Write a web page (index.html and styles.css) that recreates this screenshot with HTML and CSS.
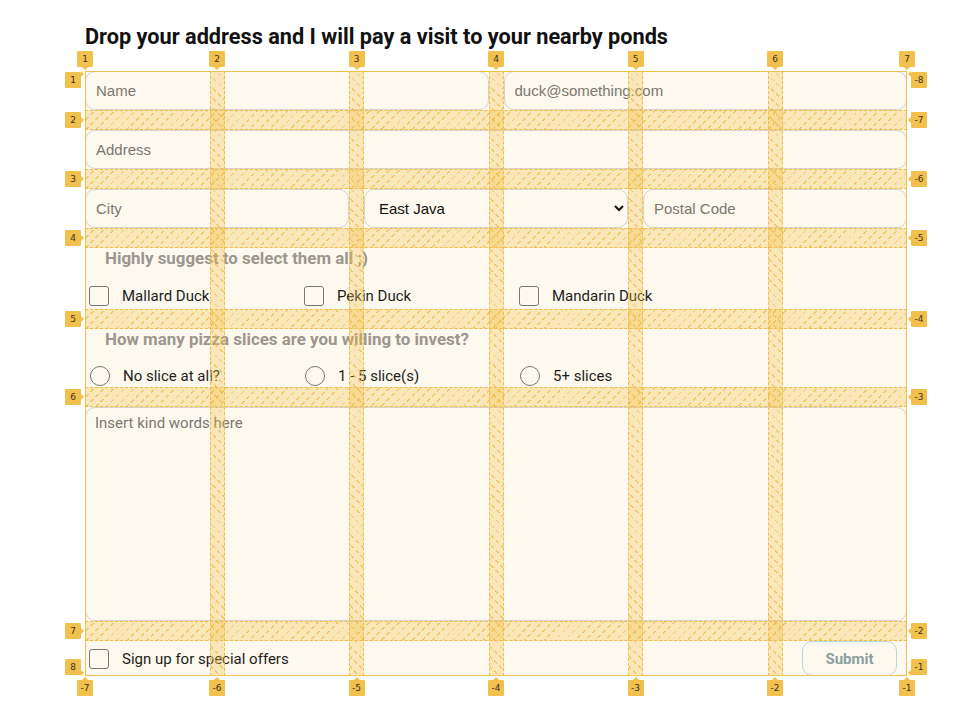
FILE: index.html
```html
<!DOCTYPE html>
<html lang="en">
<head>
<meta charset="utf-8">
<title>Duck visit</title>
<link rel="stylesheet" href="styles.css">
</head>
<body>
<main class="page">
  <h1 class="title">Drop your address and I will pay a visit to your nearby ponds</h1>
  <div class="board">
    <form class="form">
      <input class="field span3" type="text" placeholder="Name">
      <input class="field span3" type="email" placeholder="duck@something.com">
      <input class="field span6" type="text" placeholder="Address">
      <input class="field span2" type="text" placeholder="City">
      <select class="field select span2"><option>East Java</option></select>
      <input class="field span2" type="text" placeholder="Postal Code">

      <div class="group span6">
        <p class="group-title">Highly suggest to select them all ;)</p>
        <div class="options">
          <label class="opt"><input class="box" type="checkbox">Mallard Duck</label>
          <label class="opt"><input class="box" type="checkbox">Pekin Duck</label>
          <label class="opt"><input class="box" type="checkbox">Mandarin Duck</label>
        </div>
      </div>

      <div class="group group-radio span6">
        <p class="group-title">How many pizza slices are you willing to invest?</p>
        <div class="options">
          <label class="opt"><input class="dot" type="radio" name="pizza">No slice at all?</label>
          <label class="opt"><input class="dot" type="radio" name="pizza">1 - 5 slice(s)</label>
          <label class="opt"><input class="dot" type="radio" name="pizza">5+ slices</label>
        </div>
      </div>

      <textarea class="field area span6" placeholder="Insert kind words here"></textarea>

      <label class="opt signup"><input class="box" type="checkbox">Sign up for special offers</label>
      <button class="submit" type="button">Submit</button>
    </form>

    <div class="overlay" aria-hidden="true">
      <div class="cgap c2"></div>
      <div class="cgap c4"></div>
      <div class="cgap c6"></div>
      <div class="cgap c8"></div>
      <div class="cgap c10"></div>
      <div class="rgap r2"></div>
      <div class="rgap r4"></div>
      <div class="rgap r6"></div>
      <div class="rgap r8"></div>
      <div class="rgap r10"></div>
      <div class="rgap r12"></div>

      <span class="lbl top x1">1</span>
      <span class="lbl top x2">2</span>
      <span class="lbl top x3">3</span>
      <span class="lbl top x4">4</span>
      <span class="lbl top x5">5</span>
      <span class="lbl top x6">6</span>
      <span class="lbl top x7">7</span>

      <span class="lbl btm x1">-7</span>
      <span class="lbl btm x2">-6</span>
      <span class="lbl btm x3">-5</span>
      <span class="lbl btm x4">-4</span>
      <span class="lbl btm x5">-3</span>
      <span class="lbl btm x6">-2</span>
      <span class="lbl btm x7">-1</span>

      <span class="lbl left y1 corner-top">1</span>
      <span class="lbl left y2">2</span>
      <span class="lbl left y3">3</span>
      <span class="lbl left y4">4</span>
      <span class="lbl left y5">5</span>
      <span class="lbl left y6">6</span>
      <span class="lbl left y7">7</span>
      <span class="lbl left y8 corner-bottom">8</span>

      <span class="lbl right y1 corner-top">-8</span>
      <span class="lbl right y2">-7</span>
      <span class="lbl right y3">-6</span>
      <span class="lbl right y4">-5</span>
      <span class="lbl right y5">-4</span>
      <span class="lbl right y6">-3</span>
      <span class="lbl right y7">-2</span>
      <span class="lbl right y8 corner-bottom">-1</span>
    </div>
  </div>
</main>
</body>
</html>
```

FILE: styles.css
```css
* { box-sizing: border-box; }

html, body {
  margin: 0;
  background: #ffffff;
}

body {
  font-family: Roboto, "Liberation Sans", sans-serif;
  color: #1d1d1d;
  min-height: 716px;
}

.page {
  width: 907px;
  padding: 24px 0 40px 85px;
}

.title {
  margin: 0 0 21px;
  font-size: 21.7px;
  line-height: 26px;
  font-weight: 700;
  color: #111;
}

.board {
  position: relative;
  width: 822px;
}

.form {
  display: grid;
  grid-template-columns: repeat(6, 1fr);
  grid-template-rows: 39px 39px 39px 61px 58px 214px 35px;
  column-gap: 15px;
  row-gap: 20px;
  background: #fdf9ee;
  margin: 0;
}

.span2 { grid-column: span 2; }
.span3 { grid-column: span 3; }
.span6 { grid-column: span 6; }

.field {
  width: 100%;
  height: 100%;
  margin: 0;
  border: 1px solid #d8d3c8;
  border-radius: 10px;
  background: #fdf9ee;
  padding: 0 10px;
  font-family: "Liberation Sans", Arial, sans-serif;
  font-size: 15px;
  color: #222;
  outline: none;
}

.field::placeholder {
  color: #7b7772;
  opacity: 1;
}

.select {
  padding: 0 8px 0 10px;
  color: #111;
}

.area {
  resize: none;
  padding: 6px 9px;
  font-family: Roboto, "Liberation Sans", sans-serif;
  line-height: 18px;
}

.group {
  display: flex;
  flex-direction: column;
  justify-content: space-between;
  padding: 0 0 3px;
}

.group-radio {
  padding: 0 0 1px;
}

.group-title {
  margin: 0;
  padding-left: 20px;
  font-size: 16.9px;
  line-height: 20px;
  font-weight: 700;
  color: #9b968f;
}

.options {
  display: flex;
}

.opt {
  display: flex;
  align-items: center;
  width: 215px;
  height: 20px;
  font-size: 15px;
  line-height: 20px;
  color: #1d1d1d;
}

.box {
  appearance: none;
  width: 20px;
  height: 20px;
  margin: 0 13px 0 4px;
  border: 1px solid #7a7672;
  border-radius: 3px;
  background: transparent;
  flex: none;
}

.dot {
  appearance: none;
  width: 20px;
  height: 20px;
  margin: 0 13px 0 5px;
  border: 1px solid #7a7672;
  border-radius: 50%;
  background: transparent;
  flex: none;
}

.signup {
  grid-column: 1 / span 4;
  align-self: center;
  width: auto;
}

.submit {
  grid-column: 6;
  justify-self: end;
  width: 95px;
  height: 35px;
  margin: 0 10px 0 0;
  border: 1px solid #b9d6d8;
  border-radius: 10px;
  background: #fdf9ee;
  font-family: Roboto, "Liberation Sans", sans-serif;
  font-size: 15px;
  font-weight: 700;
  color: #8c9fa2;
}

/* grid inspector overlay */
.overlay {
  position: absolute;
  inset: 0;
  display: grid;
  grid-template-columns: 1fr 15px 1fr 15px 1fr 15px 1fr 15px 1fr 15px 1fr;
  grid-template-rows: 39px 20px 39px 20px 39px 20px 61px 20px 58px 20px 214px 20px 35px;
  box-shadow: inset 0 0 0 1px #f0c04e;
  pointer-events: none;
}

.cgap, .rgap {
  position: relative;
  background: rgba(244, 192, 76, 0.32);
  border: 0 dashed #efbd48;
}

.cgap {
  grid-row: 1 / -1;
  border-left-width: 1px;
  border-right-width: 1px;
}

.rgap {
  grid-column: 1 / -1;
  border-top-width: 1px;
  border-bottom-width: 1px;
}

.cgap::before, .rgap::before {
  content: "";
  position: absolute;
  inset: 0;
}

.rgap::before {
  background: repeating-linear-gradient(135deg, transparent 0 6px, rgba(238, 180, 55, 0.65) 6px 7.2px);
  -webkit-mask-image: repeating-linear-gradient(45deg, #000 0 4px, transparent 4px 7px);
  mask-image: repeating-linear-gradient(45deg, #000 0 4px, transparent 4px 7px);
}

.cgap::before {
  background: repeating-linear-gradient(45deg, transparent 0 6px, rgba(238, 180, 55, 0.65) 6px 7.2px);
  -webkit-mask-image: repeating-linear-gradient(135deg, #000 0 4px, transparent 4px 7px);
  mask-image: repeating-linear-gradient(135deg, #000 0 4px, transparent 4px 7px);
}

.c2 { grid-column: 2; }
.c4 { grid-column: 4; }
.c6 { grid-column: 6; }
.c8 { grid-column: 8; }
.c10 { grid-column: 10; }
.r2 { grid-row: 2; }
.r4 { grid-row: 4; }
.r6 { grid-row: 6; }
.r8 { grid-row: 8; }
.r10 { grid-row: 10; }
.r12 { grid-row: 12; }

.lbl {
  position: absolute;
  width: 16px;
  height: 16px;
  background: #f2c04c;
  border-radius: 1px;
  font-family: "DejaVu Sans", "Liberation Sans", sans-serif;
  font-size: 9px;
  line-height: 16px;
  text-align: center;
  color: #3b3326;
}

.lbl::after {
  content: "";
  position: absolute;
  border: 3px solid transparent;
}

.top { top: -20px; }
.top::after { left: 5px; top: 16px; border-top-color: #f2c04c; }

.btm { top: 609px; }
.btm::after { left: 5px; top: -6px; border-bottom-color: #f2c04c; }

.left { left: -20px; }
.left::after { left: 16px; top: 5px; border-left-color: #f2c04c; }

.right { left: 826px; }
.right::after { left: -6px; top: 5px; border-right-color: #f2c04c; }

.left.corner-top::after { top: -1px; }
.right.corner-top::after { top: -1px; }
.left.corner-bottom::after { top: 11px; }
.right.corner-bottom::after { top: 11px; }

.x1 { left: -8px; }
.x2 { left: 124px; }
.x3 { left: 263.5px; }
.x4 { left: 403px; }
.x5 { left: 542.5px; }
.x6 { left: 682px; }
.x7 { left: 814px; }

.y1 { top: 1px; }
.y2 { top: 41px; }
.y3 { top: 100px; }
.y4 { top: 159px; }
.y5 { top: 240px; }
.y6 { top: 318px; }
.y7 { top: 552px; }
.y8 { top: 588px; }
```
